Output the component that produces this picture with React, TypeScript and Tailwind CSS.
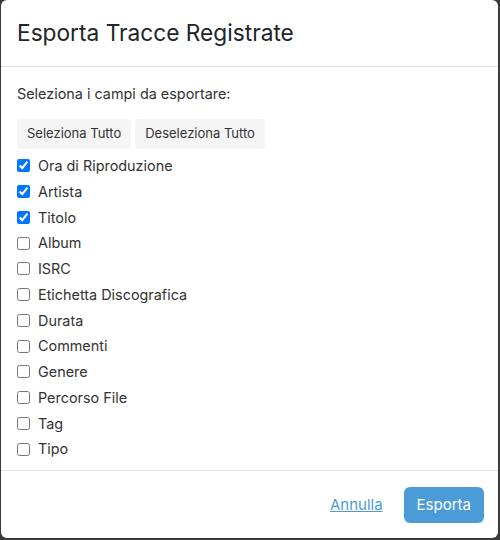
import React, { useState } from "react";

const FIELDS = [
  "Ora di Riproduzione",
  "Artista",
  "Titolo",
  "Album",
  "ISRC",
  "Etichetta Discografica",
  "Durata",
  "Commenti",
  "Genere",
  "Percorso File",
  "Tag",
  "Tipo",
];

export default function App() {
  const [checked, setChecked] = useState<boolean[]>(FIELDS.map((_, i) => i < 3));
  const toggle = (i: number) =>
    setChecked((c) => c.map((v, j) => (j === i ? !v : v)));

  return (
    <div
      className="h-[540px] w-[500px] overflow-hidden bg-[#3a3a3a] pl-[1px]"
      style={{ fontFamily: "Inter, 'Noto Sans', sans-serif" }}
    >
      <div className="flex h-[538px] w-[497px] flex-col rounded-md bg-white">
        <div className="border-b border-[#dee2e6] px-4 py-4">
          <h1 className="text-[22.7px] leading-[34px] text-[#212529]">Esporta Tracce Registrate</h1>
        </div>
        <div className="flex-1 px-4 pt-4">
          <p className="text-[14.4px] leading-[21px] text-[#333]">Seleziona i campi da esportare:</p>
          <div className="mt-[15px] flex gap-1">
            <button className="h-[30px] rounded bg-[#f5f5f5] px-[10px] text-[13px] text-[#333]">
              Seleziona Tutto
            </button>
            <button className="h-[30px] rounded bg-[#f5f5f5] px-[10px] text-[13px] text-[#333]">
              Deseleziona Tutto
            </button>
          </div>
          <div className="mt-[4px] flex flex-col">
            {FIELDS.map((f, i) => (
              <label key={f} className="flex h-[25.75px] items-center gap-2 text-[14.4px] text-[#333]">
                <input
                  type="checkbox"
                  className="m-0 h-[13px] w-[13px]"
                  checked={checked[i]}
                  onChange={() => toggle(i)}
                />
                <span>{f}</span>
              </label>
            ))}
          </div>
        </div>
        <div className="flex items-center justify-end border-t border-[#dee2e6] pl-4 pr-[14px] pb-[15px] pt-4">
          <a href="#" className="mr-[21px] text-[15px] text-[#4a9bd7] underline">
            Annulla
          </a>
          <button className="h-[36px] rounded-md bg-[#4a9bd7] px-[13px] text-[15px] text-white">
            Esporta
          </button>
        </div>
      </div>
    </div>
  );
}
